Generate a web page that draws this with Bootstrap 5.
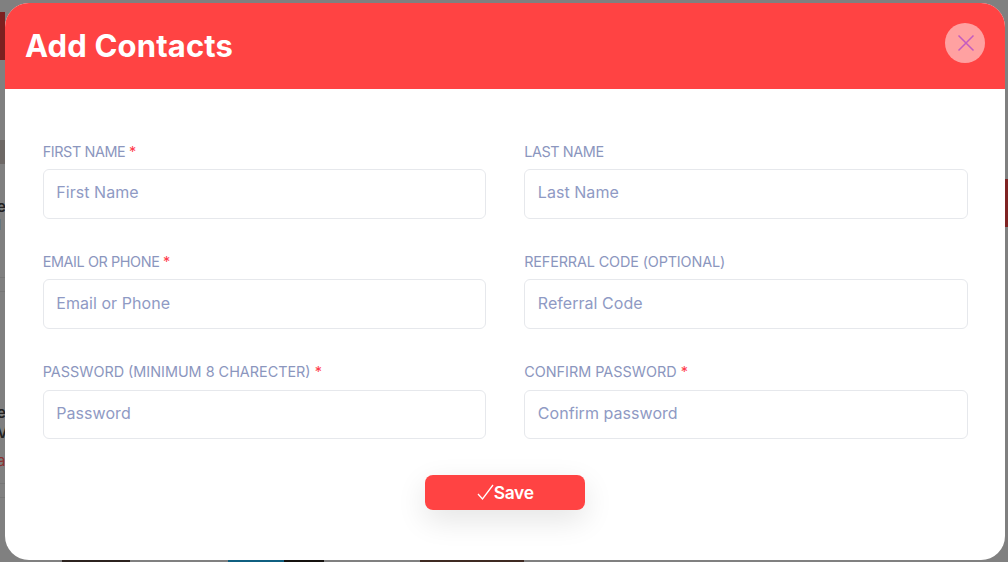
<!DOCTYPE html>
<html lang="en">
<head>
<meta charset="utf-8">
<title>Add Contacts</title>
<link href="https://cdn.jsdelivr.net/npm/bootstrap@5.3.0/dist/css/bootstrap.min.css" rel="stylesheet">
<style>
html,body{height:562px;overflow:hidden}
body{background:#808080;font-family:Inter,"Liberation Sans",sans-serif;position:relative}
.page-shell{padding:3px 3px 2px 5px;height:562px;position:relative}
.sheet{height:557px;border:0;border-radius:24px;overflow:hidden;background:#fff}
.sheet-head{height:86px;background:#ff4343;padding:0 20px 6px 20px}
.sheet-title{font-family:Inter,sans-serif;font-weight:700;font-size:31px;letter-spacing:.15px;line-height:40px;color:#fff;margin:5px 0 0}
.close-disc{width:40px;height:40px;border-radius:50%;background:#ffa1a1;border:0;padding:0 0 1px 2px}
.sheet-body{padding:52.5px 37.3px 0 37.7px}
.field-grid{--bs-gutter-x:38px;--bs-gutter-y:0}
.field-block{height:110.3px}
.field-label{font-size:14.4px;line-height:20px;color:#8b96be;text-transform:uppercase;margin:0 0 7.5px;display:block}
.label-tight{letter-spacing:-.4px}
.label-snug{letter-spacing:-.13px}
.req{color:#ff3b4e}
.field-input{height:49.6px;border:1px solid #e6e8ec;border-radius:6px;padding:0 12.6px 3px;font-size:16px;letter-spacing:.05px;color:#8b96be;box-shadow:none}
.field-input::placeholder{color:#8f9ac4;opacity:1}
.save-btn{width:160px;height:35px;background:#ff4343;border:0;border-radius:8px;color:#fff;font-weight:600;font-size:17.4px;padding:0;box-shadow:0 10px 30px rgba(0,0,0,.11);letter-spacing:-.3px;margin-top:3px}
.back-piece{position:absolute}
.bp-a{left:0;top:12px;width:5px;height:48px;background:#7d2020}
.bp-b{right:0;top:179px;width:3px;height:48px;background:#7f2323}
.bp-c{left:0;top:140px;width:5px;height:24px;background:#6d6865}
.bp-line{left:0;width:5px;height:1px;background:#767676}
.bp-bottom{bottom:0;height:2px}
.bp-text{left:-3px;font-size:15px;font-weight:600;color:#222;line-height:16px}
.bp-red{color:#8a3030;font-weight:400}
</style>
</head>
<body>
<div class="back-piece bp-a"></div>
<div class="back-piece bp-b"></div>
<div class="back-piece bp-c"></div>
<div class="back-piece bp-line" style="top:277px"></div>
<div class="back-piece bp-line" style="top:291px"></div>
<div class="back-piece bp-line" style="top:483px"></div>
<div class="back-piece bp-line" style="top:497px"></div>
<div class="back-piece bp-text" style="top:199px">e</div>
<div class="back-piece bp-text" style="top:217px">l</div>
<div class="back-piece bp-text" style="top:405px">e</div>
<div class="back-piece bp-text" style="top:425px">V</div>
<div class="back-piece bp-text bp-red" style="top:453px">a</div>
<div class="back-piece bp-bottom" style="left:62px;width:68px;background:#2c231f"></div>
<div class="back-piece bp-bottom" style="left:228px;width:56px;background:#0f5f80"></div>
<div class="back-piece bp-bottom" style="left:284px;width:40px;background:#15120f"></div>
<div class="back-piece bp-bottom" style="left:420px;width:90px;background:#3f2a22"></div>
<div class="back-piece bp-bottom" style="left:510px;width:14px;background:#3f2a22"></div>

<div class="page-shell">
  <div class="modal-content sheet">
    <div class="sheet-head d-flex align-items-center justify-content-between">
      <h5 class="sheet-title">Add Contacts</h5>
      <button type="button" class="close-disc d-flex align-items-center justify-content-center" aria-label="Close">
        <svg width="18" height="18" viewBox="0 0 18 18" fill="none" stroke="#c35bc0" stroke-width="1.5"><path d="M1.5 1.5 16.5 16.5M16.5 1.5 1.5 16.5"/></svg>
      </button>
    </div>
    <div class="sheet-body">
      <form>
        <div class="row field-grid">
          <div class="col-6 field-block">
            <label class="field-label label-tight">First Name <span class="req">*</span></label>
            <input class="form-control field-input" placeholder="First Name">
          </div>
          <div class="col-6 field-block">
            <label class="field-label label-tight">Last Name</label>
            <input class="form-control field-input" placeholder="Last Name">
          </div>
          <div class="col-6 field-block">
            <label class="field-label label-tight">Email or Phone <span class="req">*</span></label>
            <input class="form-control field-input" placeholder="Email or Phone">
          </div>
          <div class="col-6 field-block">
            <label class="field-label label-snug">Referral Code (Optional)</label>
            <input class="form-control field-input" placeholder="Referral Code">
          </div>
          <div class="col-6 field-block">
            <label class="field-label">Password (Minimum 8 Charecter) <span class="req">*</span></label>
            <input class="form-control field-input" placeholder="Password">
          </div>
          <div class="col-6 field-block">
            <label class="field-label">Confirm Password <span class="req">*</span></label>
            <input class="form-control field-input" placeholder="Confirm password">
          </div>
        </div>
        <div class="d-flex justify-content-center">
          <button type="button" class="save-btn d-flex align-items-center justify-content-center">
            <svg width="17" height="17" viewBox="0 0 17 17" fill="none" stroke="#fff" stroke-width="1.3"><path d="M1 10 5.5 15 16 1"/></svg><span>Save</span>
          </button>
        </div>
      </form>
    </div>
  </div>
</div>
</body>
</html>
